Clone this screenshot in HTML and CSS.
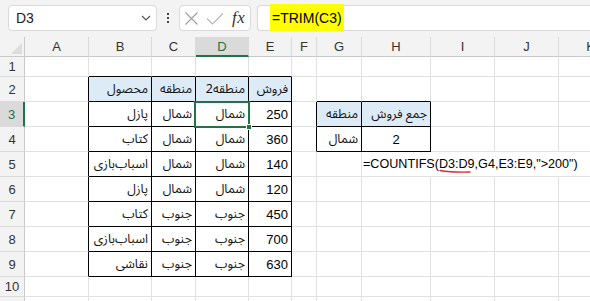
FILE: index.html
```html
<!DOCTYPE html>
<html lang="fa">
<head>
<meta charset="utf-8">
<link rel="stylesheet" href="styles.css">
</head>
<body>
<div class="toolbar">
  <div class="namebox"><span>D3</span>
    <svg class="chev" width="10" height="6" viewBox="0 0 10 6"><polyline points="1,1 5,5 9,1" fill="none" stroke="#555" stroke-width="1.2"/></svg>
  </div>
  <div class="dots"><i></i><i></i><i></i></div>
  <div class="fxbox">
    <svg width="46" height="24" viewBox="0 0 46 24"><path d="M5.5 6.5 L17.5 18.5 M17.5 6.5 L5.5 18.5" stroke="#9c9c9c" stroke-width="1.1" fill="none"/><polyline points="27,12.5 32.5,18 43,7.5" fill="none" stroke="#b4b4b4" stroke-width="1.1"/></svg>
    <span class="fx">fx</span>
  </div>
  <div class="formula"><span class="hl">=TRIM(C3)</span></div>
</div>
<div class="sheet">
  <div class="ch corner"><i class="tri"></i></div><div class="ch">A</div><div class="ch">B</div><div class="ch">C</div><div class="ch selc">D</div><div class="ch">E</div><div class="ch">F</div><div class="ch">G</div><div class="ch">H</div><div class="ch">I</div><div class="ch">J</div><div class="ch">K</div>

  <div class="rh">1</div><div class="c"></div><div class="c bb"></div><div class="c bb"></div><div class="c bb"></div><div class="c bb"></div><div class="c"></div><div class="c"></div><div class="c"></div><div class="c"></div><div class="c"></div><div class="c"></div>

  <div class="rh">2</div><div class="c bl"></div><div class="c bt th ar">محصول</div><div class="c bt th ar">منطقه</div><div class="c bt th ar">منطقه2</div><div class="c bt th ar">فروش</div><div class="c"></div><div class="c bb"></div><div class="c bb"></div><div class="c"></div><div class="c"></div><div class="c"></div>

  <div class="rh selr">3</div><div class="c bl"></div><div class="c bt ar">پازل</div><div class="c bt ar">شمال</div><div class="c bt ar cur">شمال<span class="selbox"><i class="handle"></i></span></div><div class="c bt num">250</div><div class="c bl"></div><div class="c bt th ar">منطقه</div><div class="c bt th ar">جمع فروش</div><div class="c"></div><div class="c"></div><div class="c"></div>

  <div class="rh">4</div><div class="c bl"></div><div class="c bt ar">کتاب</div><div class="c bt ar">شمال</div><div class="c bt ar">شمال</div><div class="c bt num">360</div><div class="c bl"></div><div class="c bt ar">شمال</div><div class="c bt mid">2</div><div class="c"></div><div class="c"></div><div class="c"></div>

  <div class="rh">5</div><div class="c bl"></div><div class="c bt ar">اسباب‌بازی</div><div class="c bt ar">شمال</div><div class="c bt ar">شمال</div><div class="c bt num">140</div><div class="c"></div><div class="c"></div><div class="c nr fml">=COUNTIFS(D3:D9,G4,E3:E9,"&gt;200")<svg class="squig" width="34" height="6" viewBox="0 0 34 6"><path d="M1 1.5 Q12 3.5 31 3" fill="none" stroke="#e0262b" stroke-width="1.4" stroke-linecap="round"/></svg></div><div class="c nr"></div><div class="c nr"></div><div class="c"></div>

  <div class="rh">6</div><div class="c bl"></div><div class="c bt ar">پازل</div><div class="c bt ar">شمال</div><div class="c bt ar">شمال</div><div class="c bt num">120</div><div class="c"></div><div class="c"></div><div class="c"></div><div class="c"></div><div class="c"></div><div class="c"></div>

  <div class="rh">7</div><div class="c bl"></div><div class="c bt ar">کتاب</div><div class="c bt ar">جنوب</div><div class="c bt ar">جنوب</div><div class="c bt num">450</div><div class="c"></div><div class="c"></div><div class="c"></div><div class="c"></div><div class="c"></div><div class="c"></div>

  <div class="rh">8</div><div class="c bl"></div><div class="c bt ar">اسباب‌بازی</div><div class="c bt ar">جنوب</div><div class="c bt ar">جنوب</div><div class="c bt num">700</div><div class="c"></div><div class="c"></div><div class="c"></div><div class="c"></div><div class="c"></div><div class="c"></div>

  <div class="rh">9</div><div class="c bl"></div><div class="c bt ar">نقاشی</div><div class="c bt ar">جنوب</div><div class="c bt ar">جنوب</div><div class="c bt num">630</div><div class="c"></div><div class="c"></div><div class="c"></div><div class="c"></div><div class="c"></div><div class="c"></div>

  <div class="rh">10</div><div class="c"></div><div class="c"></div><div class="c"></div><div class="c"></div><div class="c"></div><div class="c"></div><div class="c"></div><div class="c"></div><div class="c"></div><div class="c"></div><div class="c"></div>

  <div class="rh"></div><div class="c"></div><div class="c"></div><div class="c"></div><div class="c"></div><div class="c"></div><div class="c"></div><div class="c"></div><div class="c"></div><div class="c"></div><div class="c"></div><div class="c"></div>
</div>
</body>
</html>
```

FILE: styles.css
```css
* { box-sizing: border-box; margin: 0; padding: 0; }
body {
  width: 590px; height: 301px; overflow: hidden; background: #fff;
  font-family: "Liberation Sans", "DejaVu Sans", sans-serif; color: #000;
}
.toolbar {
  height: 37px; background: #f3f3f3; display: flex; align-items: flex-start;
  padding: 5px 0 0 8px;
}
.namebox {
  width: 149px; height: 26px; background: #fff; border: 1px solid #d9d9d9; border-radius: 4px;
  display: flex; align-items: center; justify-content: space-between;
  padding: 0 5px 0 7px; font-size: 14px; color: #222;
}
.dots { width: 22px; height: 26px; display: flex; flex-direction: column; align-items: center; justify-content: center; gap: 2px; }
.dots i { display: block; width: 2px; height: 2px; background: #444; }
.fxbox {
  width: 72px; height: 26px; background: #fff; border: 1px solid #d9d9d9; border-radius: 4px;
  display: flex; align-items: center;
}
.fx { font-family: "Liberation Serif", serif; font-style: italic; font-size: 17px; color: #333; margin-left: 6px; letter-spacing: 0.5px; }
.formula {
  flex: 1; height: 26px; margin-left: 6px; background: #fff; border: 1px solid #d9d9d9;
  border-right: none; border-radius: 4px 0 0 4px; display: flex; padding-left: 12px;
  font-size: 14px;
}
.hl { background: #ffff00; margin: -2px 0 -1px; display: flex; align-items: center; padding: 0 2px; }

.sheet {
  display: grid;
  grid-template-columns: 25px 64px 63px 44px 53px 43px 25px 45px 69px 64px 64px 64px;
  grid-template-rows: 20px 20px repeat(8, 25px) 20px 20px;
  font-size: 13px;
}
.ch {
  background: #f3f3f3; border-right: 1px solid #dadada; border-bottom: 1px solid #c9c9c9;
  display: flex; align-items: center; justify-content: center; color: #333; font-size: 13px;
}
.corner { position: relative; border-right-color: #c9c9c9; }
.tri { position: absolute; right: 2px; bottom: 2px; width: 0; height: 0; border-style: solid; border-width: 0 0 11px 11px; border-color: transparent transparent #dcdcdc transparent; }
.selc { background: #dadada; color: #217346; border-bottom: 2px solid #217346; }
.rh {
  background: #f3f3f3; border-right: 1px solid #c9c9c9; border-bottom: 1px solid #dadada;
  display: flex; align-items: center; justify-content: center; color: #333; font-size: 13px;
}
.selr { background: #dadada; color: #217346; border-right: 2px solid #217346; }
.c {
  border-right: 1px solid #e1e1e1; border-bottom: 1px solid #e1e1e1;
  display: flex; align-items: center; padding: 0 3px; white-space: nowrap; position: relative;
}
.bb { border-bottom-color: #000; }
.bl { border-right-color: #000; }
.bt { border-right-color: #000; border-bottom-color: #000; }
.th { background: #ddebf7; }
.ar { direction: rtl; font-family: "Noto Sans Arabic", "Noto Naskh Arabic", "DejaVu Sans", sans-serif; font-size: 12.5px; color: #111; }
.num { justify-content: flex-end; }
.mid { justify-content: center; }
.nr { border-right-color: transparent; }
.fml { padding-left: 1px; font-size: 12.6px; overflow: visible; z-index: 1; }
.squig { position: absolute; left: 77px; top: 17px; }
.selbox {
  position: absolute; left: -2px; top: -1px; right: -2px; bottom: -2px;
  border: 2px solid #217346; z-index: 2;
}
.handle {
  position: absolute; right: -4px; bottom: -4px; width: 6px; height: 6px;
  background: #217346; border: 1px solid #fff;
}
```
